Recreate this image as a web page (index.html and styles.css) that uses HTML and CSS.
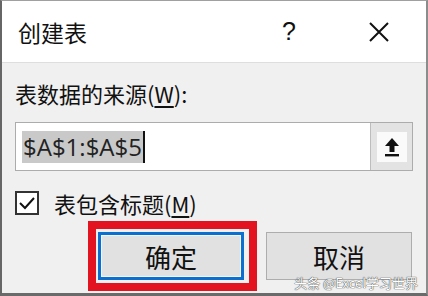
FILE: index.html
```html
<!DOCTYPE html>
<html lang="zh-CN">
<head>
	<meta charset="UTF-8"/>
	<title>创建表</title>
	<link rel="stylesheet" href="styles.css">
</head>
<body>
	<div class="dialog">
		<div class="titlebar">
			<span class="title">创建表</span>
			<span class="help">?</span>
			<span class="close">
				<svg width="22" height="22" viewBox="0 0 22 22"><path d="M2 2L20 20M20 2L2 20" stroke="#111" stroke-width="2" fill="none"/></svg>
			</span>
		</div>
		<div class="content">
			<div class="label">表数据的来源(<u>W</u>):</div>
			<div class="range">
				<div class="range-text"><span class="sel">$A$1:$A$5</span><span class="caret"></span></div>
				<div class="range-btn">
					<span class="range-icon">
						<svg width="18" height="22" viewBox="0 0 18 22"><path d="M9 2L16 10H11.5V16H6.5V10H2Z" fill="#111"/><rect x="2" y="18" width="14" height="2.4" fill="#111"/></svg>
					</span>
				</div>
			</div>
			<div class="check-row">
				<span class="checkbox">
					<svg width="18" height="16" viewBox="0 0 18 16"><path d="M2 8L7 13L16 3" stroke="#111" stroke-width="2" fill="none"/></svg>
				</span>
				<span>表包含标题(<u>M</u>)</span>
			</div>
			<div class="buttons">
				<div class="ok-wrap">
					<button class="btn ok">确定</button>
					<span class="mark"></span>
				</div>
				<button class="btn">取消</button>
			</div>
		</div>
		<div class="watermark">头条 @Excel学习世界</div>
	</div>
</body>
</html>
```

FILE: styles.css
```css
* { margin: 0; padding: 0; box-sizing: border-box; }
body {
	background-color: #fff;
	font-family: "Noto Sans CJK SC", "Noto Sans", sans-serif;
	color: #111;
}
.dialog {
	position: relative;
	width: 428px;
	height: 296px;
	background-color: #f0f0f0;
	border-top: 1px solid #a0a0a0;
	border-left: 2px solid #666;
	border-right: 2px solid #8c8c8c;
	border-bottom: 3px solid #6a6a6a;
}
.titlebar {
	height: 62px;
	background-color: #fff;
	border-bottom: 1px solid #dedede;
	display: flex;
	align-items: center;
	padding-left: 16px;
}
.title {
	font-size: 23px;
	flex: 1;
}
.help {
	font-family: "Liberation Sans", sans-serif;
	font-size: 25px;
	width: 26px;
	margin-right: 60px;
}
.close {
	display: flex;
	width: 22px;
	margin-right: 36px;
}
.content {
	padding: 15px 13px 0 13px;
}
.label {
	font-size: 22px;
	line-height: 30px;
}
.label u, .check-row u { text-underline-offset: 3px; }
.range {
	margin-top: 14px;
	height: 49px;
	display: flex;
	background-color: #fff;
	border: 1px solid #acacac;
}
.range-text {
	flex: 1;
	display: flex;
	align-items: center;
	padding-left: 6px;
}
.sel {
	background-color: #c9c9c9;
	font-family: "Open Sans", "Noto Sans", sans-serif;
	font-size: 24px;
	line-height: 32px;
	padding: 0 1px;
	color: #222;
}
.caret {
	width: 2px;
	height: 32px;
	background-color: #111;
}
.range-btn {
	width: 42px;
	background-color: #e3e3e3;
	border-left: 1px solid #bdbdbd;
	display: flex;
	align-items: center;
	justify-content: center;
}
.range-icon {
	width: 30px;
	height: 30px;
	background-color: #fafafa;
	display: flex;
	align-items: center;
	justify-content: center;
}
.check-row {
	margin-top: 19px;
	display: flex;
	align-items: center;
	gap: 15px;
	font-size: 22px;
	height: 26px;
}
.checkbox {
	width: 24px;
	height: 24px;
	border: 2px solid #333;
	background-color: #fff;
	display: flex;
	align-items: center;
	justify-content: center;
}
.buttons {
	margin-top: 16px;
	display: flex;
	padding-left: 83px;
	gap: 22px;
}
.ok-wrap {
	position: relative;
	display: flex;
}
.btn {
	width: 146px;
	height: 48px;
	background-color: #e1e1e1;
	border: 1px solid #adadad;
	font-family: "Noto Sans CJK SC", sans-serif;
	font-size: 26px;
	color: #111;
}
.ok {
	border: 3px solid #0a6fce;
	box-shadow: inset 0 0 0 1px #f4f4f4;
}
.mark {
	position: absolute;
	top: -11px;
	left: -10px;
	right: -13px;
	bottom: -11px;
	border: 8px solid #e3141f;
}
.watermark {
	position: absolute;
	right: 8px;
	bottom: 1px;
	font-size: 13px;
	color: #fff;
	text-shadow: 0 0 1px #333, 0 0 1px #333;
}
```
